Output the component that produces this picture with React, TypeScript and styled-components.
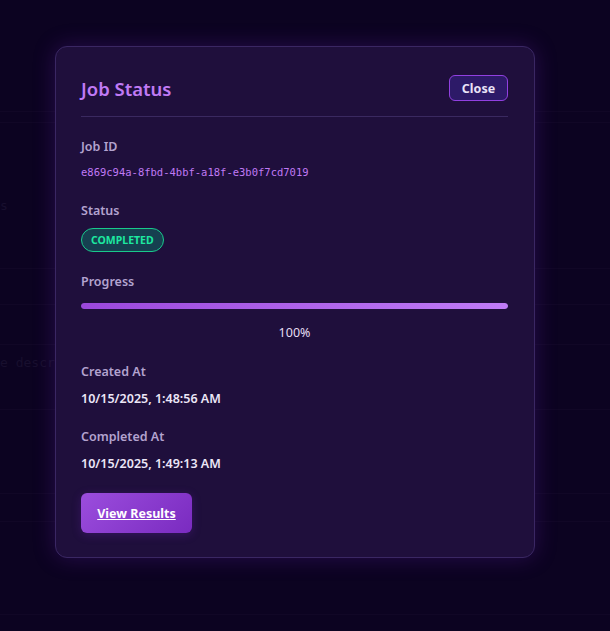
import React from "react";
import styled, { createGlobalStyle } from "styled-components";

const Global = createGlobalStyle`
  html, body { margin: 0; padding: 0; background: #0c0321; }
  body { font-family: "Noto Sans", "Open Sans", sans-serif; }
  * { box-sizing: border-box; }
`;

const Page = styled.div`
  width: 610px;
  height: 631px;
  background: #0c0321;
  overflow: hidden;
  position: relative;
`;

const BackRows = styled.div`
  display: flex;
  flex-direction: column;
  padding-top: 111px;
`;

const BackRow = styled.div<{ $h: number }>`
  height: ${(p) => p.$h}px;
  border-top: 1px solid #110726;
  display: flex;
  align-items: center;
  font-family: "DejaVu Sans Mono", monospace;
  font-size: 13px;
  color: #180f2e;
  white-space: nowrap;
`;

const BackText = styled.span<{ $top?: number }>`
  margin-top: ${(p) => p.$top ?? 0}px;
`;

const Overlay = styled.div`
  position: absolute;
  inset: 0;
  padding: 46px 0 0 55px;
  display: flex;
  align-items: flex-start;
`;

const Modal = styled.div`
  width: 480px;
  background: #1f0f3c;
  border: 1px solid #3a2763;
  border-radius: 12px;
  padding: 27px 26px 24px 25px;
  box-shadow: 0 0 22px rgba(110, 40, 190, 0.28);
  display: flex;
  flex-direction: column;
`;

const Header = styled.div`
  display: flex;
  align-items: center;
  justify-content: space-between;
  height: 28px;
  margin-bottom: 15px;
  position: relative;
  &::after {
    content: "";
    position: absolute;
    left: 0;
    right: 0;
    bottom: -15px;
    height: 1px;
    background: #3a2960;
  }
`;

const Title = styled.h2`
  margin: 0;
  font-size: 18.5px;
  font-weight: 600;
  color: #c07af5;
  line-height: 28px;
  padding-top: 1px;
`;

const CloseButton = styled.button`
  width: 59px;
  height: 26px;
  border: 1px solid #9140e0;
  background: #2d1a68;
  color: #e9e2f7;
  border-radius: 6px;
  font-family: inherit;
  font-size: 12.5px;
  font-weight: 700;
  padding: 0;
  cursor: pointer;
`;

const Body = styled.div`
  display: flex;
  flex-direction: column;
  padding-top: 21px;
`;

const Section = styled.div<{ $gap?: number }>`
  display: flex;
  flex-direction: column;
  margin-bottom: ${(p) => p.$gap ?? 21}px;
`;

const Label = styled.div<{ $space?: number }>`
  font-size: 12.5px;
  font-weight: 600;
  color: #b3a3cf;
  line-height: 18px;
  margin-bottom: ${(p) => p.$space ?? 8}px;
`;

const Mono = styled.div`
  font-family: "DejaVu Sans Mono", monospace;
  font-size: 10.5px;
  color: #c07af5;
  line-height: 16px;
`;

const Badge = styled.span`
  align-self: flex-start;
  height: 24px;
  padding: 0 9px;
  border-radius: 12px;
  border: 1px solid #19c98c;
  background: #164050;
  color: #1de9a0;
  font-size: 10.5px;
  font-weight: 700;
  display: inline-flex;
  align-items: center;
`;

const Track = styled.div`
  height: 6px;
  border-radius: 3px;
  background: #3a2960;
  margin-top: 4px;
  overflow: hidden;
`;

const Fill = styled.div`
  height: 100%;
  border-radius: 3px;
  background: linear-gradient(90deg, #9b48dc, #c07cf7);
`;

const Percent = styled.div`
  text-align: center;
  font-size: 12.5px;
  color: #e6def3;
  line-height: 18px;
  margin-top: 15px;
`;

const Value = styled.div`
  font-size: 12.5px;
  font-weight: 600;
  color: #ece6f7;
  line-height: 18px;
`;

const ResultsButton = styled.button`
  align-self: flex-start;
  width: 111px;
  height: 40px;
  border: none;
  border-radius: 6px;
  background: linear-gradient(135deg, #9b4ddd, #7a2bc0);
  color: #ffffff;
  font-family: inherit;
  font-size: 12.5px;
  font-weight: 700;
  text-decoration: underline;
  cursor: pointer;
  box-shadow: 0 2px 10px rgba(120, 40, 200, 0.25);
`;

export default function App() {
  const progress = 100;
  return (
    <>
      <Global />
      <Page>
        <BackRows>
          <BackRow $h={11} />
          <BackRow $h={146}>
            <BackText $top={20}>s</BackText>
          </BackRow>
          <BackRow $h={36} />
          <BackRow $h={40} />
          <BackRow $h={65}>
            <BackText $top={-29}>e descri</BackText>
          </BackRow>
          <BackRow $h={84} />
          <BackRow $h={28} />
          <BackRow $h={93} />
          <BackRow $h={20} />
        </BackRows>
        <Overlay>
          <Modal>
            <Header>
              <Title>Job Status</Title>
              <CloseButton>Close</CloseButton>
            </Header>
            <Body>
              <Section $gap={22}>
                <Label>Job ID</Label>
                <Mono>e869c94a-8fbd-4bbf-a18f-e3b0f7cd7019</Mono>
              </Section>
              <Section>
                <Label>Status</Label>
                <Badge>COMPLETED</Badge>
              </Section>
              <Section $gap={21}>
                <Label>Progress</Label>
                <Track>
                  <Fill style={{ width: `${progress}%` }} />
                </Track>
                <Percent>{progress}%</Percent>
              </Section>
              <Section $gap={20}>
                <Label $space={9}>Created At</Label>
                <Value>10/15/2025, 1:48:56 AM</Value>
              </Section>
              <Section $gap={20}>
                <Label $space={9}>Completed At</Label>
                <Value>10/15/2025, 1:49:13 AM</Value>
              </Section>
              <ResultsButton>View Results</ResultsButton>
            </Body>
          </Modal>
        </Overlay>
      </Page>
    </>
  );
}
